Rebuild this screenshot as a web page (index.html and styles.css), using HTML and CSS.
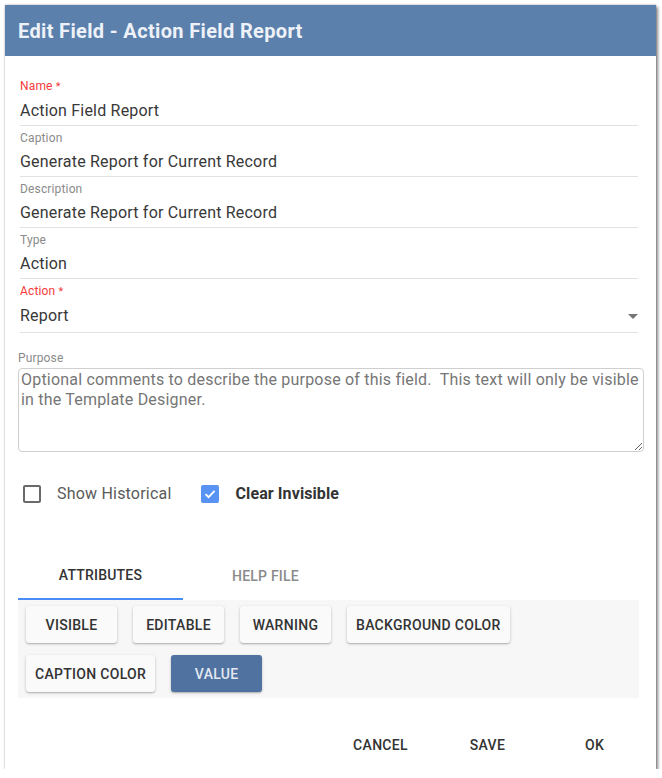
FILE: index.html
```html
<!DOCTYPE html>
<html lang="en">
<head>
<meta charset="utf-8">
<title>Edit Field - Action Field Report</title>
<link rel="stylesheet" href="styles.css">
</head>
<body>
<div class="dialog">
  <div class="dlg-header"><h1 class="dlg-title">Edit Field - Action Field Report</h1></div>
  <div class="dlg-body">
    <div class="field">
      <div class="field-label required">Name <span class="ast">*</span></div>
      <div class="field-value">Action Field Report</div>
    </div>
    <div class="field">
      <div class="field-label">Caption</div>
      <div class="field-value">Generate Report for Current Record</div>
    </div>
    <div class="field">
      <div class="field-label">Description</div>
      <div class="field-value">Generate Report for Current Record</div>
    </div>
    <div class="field">
      <div class="field-label">Type</div>
      <div class="field-value">Action</div>
    </div>
    <div class="field field-select">
      <div class="field-label required">Action <span class="ast">*</span></div>
      <div class="field-value"><span>Report</span><svg class="caret" width="10" height="5" viewBox="0 0 10 5"><path d="M0 0H10L5 5Z" fill="#757575"/></svg></div>
    </div>
    <div class="purpose">
      <div class="purpose-label">Purpose</div>
      <textarea class="purpose-input">Optional comments to describe the purpose of this field.  This text will only be visible in the Template Designer.</textarea>
    </div>
    <div class="checks">
      <div class="check">
        <span class="box"></span>
        <span class="check-text">Show Historical</span>
      </div>
      <div class="check checked">
        <span class="box"><svg width="14" height="14" viewBox="0 0 14 14"><path d="M2.5 7.2L5.6 10.2L11.6 3.8" fill="none" stroke="#fff" stroke-width="1.8"/></svg></span>
        <span class="check-text strong">Clear Invisible</span>
      </div>
    </div>
    <div class="tabs">
      <div class="tab active">Attributes</div>
      <div class="tab">Help File</div>
    </div>
    <div class="attr-panel">
      <div class="attr-row">
        <button class="attr-btn">Visible</button>
        <button class="attr-btn">Editable</button>
        <button class="attr-btn">Warning</button>
        <button class="attr-btn">Background Color</button>
      </div>
      <div class="attr-row">
        <button class="attr-btn">Caption Color</button>
        <button class="attr-btn primary">Value</button>
      </div>
    </div>
  </div>
  <div class="dlg-footer">
    <button class="foot-btn">Cancel</button>
    <button class="foot-btn">Save</button>
    <button class="foot-btn">OK</button>
  </div>
</div>
</body>
</html>
```
FILE: styles.css
```css
html, body {
  margin: 0;
  padding: 0;
  background: #ffffff;
}

body {
  font-family: Roboto, "Liberation Sans", Arial, sans-serif;
  color: #333;
}

.dialog {
  margin: 5px 0 0 5px;
  width: 651px;
  height: 764px;
  display: flex;
  flex-direction: column;
  background: #fff;
  box-shadow: 0 0 2px rgba(0, 0, 0, 0.3), 2px 2px 3px rgba(0, 0, 0, 0.45);
}

.dlg-header {
  height: 51px;
  flex: none;
  background: #5b80ac;
  display: flex;
  align-items: center;
  padding-left: 13px;
}

.dlg-title {
  margin: 0;
  font-size: 20px;
  font-weight: 700;
  letter-spacing: 0.35px;
  color: #eef2f8;
}

.dlg-body {
  flex: 1;
  padding: 18px 0 0 13px;
}

.field {
  margin: 0 18px 0 2px;
  padding-top: 5px;
  border-bottom: 1px solid #e2e2e2;
}

.field-label {
  font-size: 12px;
  line-height: 14px;
  letter-spacing: 0.15px;
  color: #8a8a8a;
}

.field-label.required {
  color: #f53b3b;
}

.ast {
  font-size: 11px;
}

.field-value {
  font-size: 16px;
  line-height: 20px;
  letter-spacing: 0.2px;
  padding: 7px 0 4px;
  color: #383838;
}

.field-select .field-value {
  display: flex;
  justify-content: space-between;
  align-items: center;
  padding-bottom: 6px;
}

.caret {
  margin-right: 0;
}

.purpose {
  margin-top: 18px;
}

.purpose-label {
  font-size: 12px;
  line-height: 14px;
  letter-spacing: 0.15px;
  color: #8a8a8a;
}

.purpose-input {
  display: block;
  margin: 3px 0 0;
  width: 626px;
  height: 84px;
  box-sizing: border-box;
  border: 1px solid #cfcfcf;
  border-radius: 4px;
  padding: 1px 2px;
  font-family: Roboto, "Liberation Sans", Arial, sans-serif;
  font-size: 16px;
  line-height: 20px;
  letter-spacing: 0.2px;
  color: #767676;
  resize: vertical;
  outline: none;
}

.checks {
  margin-top: 30px;
  height: 24px;
  padding-left: 5px;
  display: flex;
  align-items: center;
}

.check {
  display: flex;
  align-items: center;
  gap: 16px;
}

.check + .check {
  margin-left: 30px;
}

.box {
  width: 18px;
  height: 18px;
  box-sizing: border-box;
  border: 2px solid #6a6a6a;
  border-radius: 2px;
  display: flex;
  align-items: center;
  justify-content: center;
}

.checked .box {
  background: #5893f4;
  border-color: #5893f4;
}

.check-text {
  font-size: 16px;
  line-height: 20px;
  letter-spacing: 0.2px;
  color: #5a5a5a;
}

.check-text.strong {
  font-weight: 700;
  letter-spacing: 0.1px;
  color: #333;
}

.tabs {
  margin-top: 46px;
  display: flex;
}

.tab {
  width: 165px;
  height: 48px;
  box-sizing: border-box;
  display: flex;
  align-items: center;
  justify-content: center;
  font-size: 14px;
  font-weight: 500;
  letter-spacing: 0.2px;
  text-transform: uppercase;
  color: #8a8a8a;
}

.tab.active {
  color: #333;
  border-bottom: 2px solid #4a8cf6;
}

.attr-panel {
  width: 621px;
  box-sizing: border-box;
  background: #f7f7f7;
  padding: 6px 8px 6px;
  display: flex;
  flex-direction: column;
  gap: 12px;
}

.attr-row {
  display: flex;
  gap: 16px;
}

.attr-btn {
  height: 37px;
  min-width: 91px;
  padding: 0 9px;
  border: none;
  border-radius: 3px;
  background: #fafafa;
  box-shadow: 0 1px 3px rgba(0, 0, 0, 0.22), 0 1px 1px rgba(0, 0, 0, 0.12);
  font-family: Roboto, "Liberation Sans", Arial, sans-serif;
  font-size: 14px;
  font-weight: 500;
  letter-spacing: 0.3px;
  text-transform: uppercase;
  color: #333;
}

.attr-btn.primary {
  background: #4f72a0;
  color: #e4e9f2;
}

.dlg-footer {
  flex: none;
  display: flex;
  justify-content: flex-end;
  padding: 0 8px 6px;
}

.foot-btn {
  width: 107px;
  height: 36px;
  border: none;
  background: transparent;
  font-family: Roboto, "Liberation Sans", Arial, sans-serif;
  font-size: 14px;
  font-weight: 500;
  letter-spacing: 0.3px;
  text-transform: uppercase;
  color: #333;
}
```
